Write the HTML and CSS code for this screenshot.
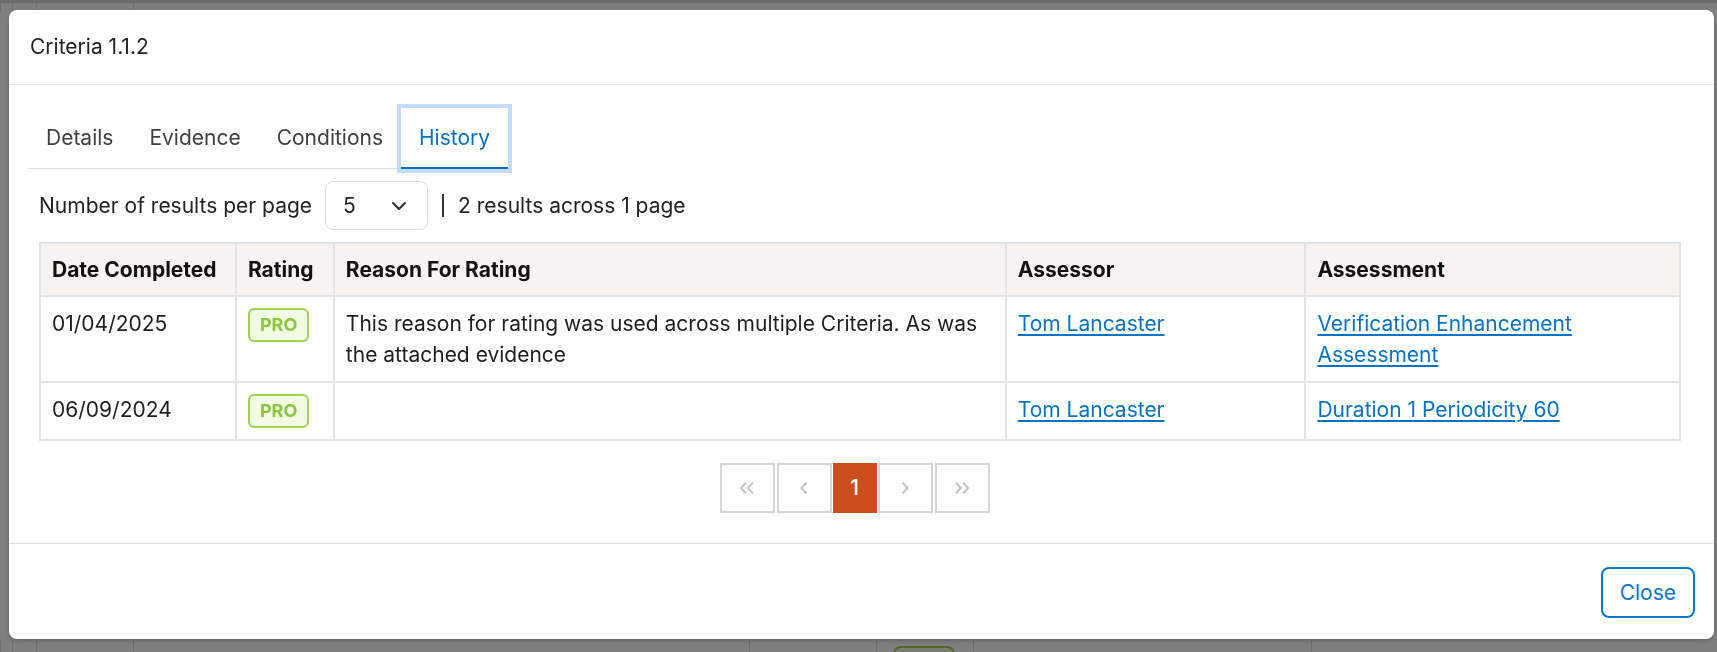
FILE: index.html
```html
<!DOCTYPE html>
<html lang="en">
<head>
    <meta charset="UTF-8">
    <meta name="viewport" content="width=device-width, initial-scale=1.0">
    <title>Criteria 1.1.2 - History</title>
    <link rel="stylesheet" href="styles.css">
</head>
<body>
    <div class="page">
        <div class="page-row page-row-top">
            <div class="pcell"></div>
            <div class="pcell"></div>
            <div class="pcell"></div>
            <div class="pcell"></div>
        </div>
        <div class="page-row page-row-bottom">
            <div class="pcell"></div>
            <div class="pcell"></div>
            <div class="pcell"></div>
            <div class="pcell"></div>
            <div class="pcell"></div>
            <div class="pcell"><span class="page-badge"></span></div>
            <div class="pcell"></div>
            <div class="pcell"></div>
        </div>
    </div>

    <div class="overlay">
        <div class="modal">
            <div class="modal-header">Criteria 1.1.2</div>

            <div class="modal-body">
                <div class="tabs">
                    <button class="tab">Details</button>
                    <button class="tab">Evidence</button>
                    <button class="tab">Conditions</button>
                    <button class="tab active">History</button>
                </div>

                <div class="results-bar">
                    <span>Number of results per page</span>
                    <div class="select">
                        <span>5</span>
                        <svg width="18" height="12" viewBox="0 0 18 12"><path d="M3 3 L9 9 L15 3" fill="none" stroke="#2b2b2b" stroke-width="2" stroke-linecap="round" stroke-linejoin="round"/></svg>
                    </div>
                    <span class="divider"></span>
                    <span>2 results across 1 page</span>
                </div>

                <table class="history">
                    <thead>
                        <tr>
                            <th class="col-date">Date Completed</th>
                            <th class="col-rating">Rating</th>
                            <th class="col-reason">Reason For Rating</th>
                            <th class="col-assessor">Assessor</th>
                            <th class="col-assessment">Assessment</th>
                        </tr>
                    </thead>
                    <tbody>
                        <tr>
                            <td>01/04/2025</td>
                            <td><span class="badge">PRO</span></td>
                            <td>This reason for rating was used across multiple Criteria. As was the attached evidence</td>
                            <td><a href="#">Tom Lancaster</a></td>
                            <td><a href="#">Verification Enhancement Assessment</a></td>
                        </tr>
                        <tr>
                            <td>06/09/2024</td>
                            <td><span class="badge">PRO</span></td>
                            <td></td>
                            <td><a href="#">Tom Lancaster</a></td>
                            <td><a href="#">Duration 1 Periodicity 60</a></td>
                        </tr>
                    </tbody>
                </table>

                <div class="pagination">
                    <button class="page-btn">
                        <svg width="18" height="14" viewBox="0 0 18 14"><path d="M8 1.5 L3 7 L8 12.5 M15 1.5 L10 7 L15 12.5" fill="none" stroke="#c2c2c2" stroke-width="2"/></svg>
                    </button>
                    <button class="page-btn">
                        <svg width="10" height="14" viewBox="0 0 10 14"><path d="M7.5 1.5 L2.5 7 L7.5 12.5" fill="none" stroke="#c2c2c2" stroke-width="2"/></svg>
                    </button>
                    <button class="page-btn current">1</button>
                    <button class="page-btn">
                        <svg width="10" height="14" viewBox="0 0 10 14"><path d="M2.5 1.5 L7.5 7 L2.5 12.5" fill="none" stroke="#c2c2c2" stroke-width="2"/></svg>
                    </button>
                    <button class="page-btn">
                        <svg width="18" height="14" viewBox="0 0 18 14"><path d="M3 1.5 L8 7 L3 12.5 M10 1.5 L15 7 L10 12.5" fill="none" stroke="#c2c2c2" stroke-width="2"/></svg>
                    </button>
                </div>
            </div>

            <div class="modal-footer">
                <button class="btn-close">Close</button>
            </div>
        </div>
    </div>
</body>
</html>
```

FILE: styles.css
```css
* {
    box-sizing: border-box;
    margin: 0;
    padding: 0;
}

body {
    font-family: 'Inter', 'Noto Sans', sans-serif;
    font-size: 21px;
    line-height: 30px;
    color: #1e1e1e;
    background: #ffffff;
    width: 1717px;
    height: 652px;
    overflow: hidden;
}

/* page behind the dialog */
.page {
    height: 652px;
    display: flex;
    flex-direction: column;
    justify-content: space-between;
    background: #ffffff;
}

.page-row {
    display: grid;
    height: 12px;
}

.page-row-top {
    grid-template-columns: 12px 24px 97px 1fr;
    border-top: 3px solid #d6d6d6;
}

.page-row-bottom {
    grid-template-columns: 12px 24px 97px 616px 127px 97px 338px 1fr;
}

.pcell {
    border-left: 1px solid #dcdfe3;
}

.page-badge {
    display: block;
    width: 62px;
    height: 20px;
    margin: 6px 0 0 16px;
    border: 2px solid #a3d153;
    border-radius: 8px;
    background: #f1fbe4;
}

/* dialog */
.overlay {
    position: fixed;
    inset: 0;
    background: rgba(0, 0, 0, 0.5);
}

.modal {
    margin: 10px 3px 0 9px;
    background: #ffffff;
    border-radius: 8px;
    box-shadow: 0 2px 4px rgba(0, 0, 0, 0.2);
}

.modal-header {
    padding: 22px 21px;
    border-bottom: 1px solid #dee2e6;
    color: #222222;
}

.modal-body {
    padding: 23px 20px 30px 19px;
}

.tabs {
    display: inline-flex;
    border-bottom: 1px solid #dee2e6;
}

.tab {
    font: inherit;
    background: none;
    border: none;
    padding: 15px 18px 15px;
    color: #404040;
    cursor: pointer;
}

.tab.active {
    color: #0b6fbf;
    border-bottom: 2px solid #0b6fbf;
    margin-bottom: -1px;
    padding-bottom: 14px;
    box-shadow: 0 0 0 4px #c4dcfb;
}

.results-bar {
    display: flex;
    align-items: center;
    gap: 13px;
    margin-top: 12px;
    padding-left: 11px;
    color: #222222;
}

.select {
    width: 103px;
    height: 49px;
    display: flex;
    align-items: center;
    justify-content: space-between;
    padding: 0 19px 0 17px;
    border: 1.5px solid #d9dde2;
    border-radius: 8px;
}

.divider {
    width: 2px;
    height: 23px;
    background: #333333;
    margin: 0 1px;
}

.history {
    width: 1642px;
    margin: 12px 0 0 11px;
    border-collapse: collapse;
    border: 2px solid #e1e4e8;
    line-height: 31px;
}

.history th,
.history td {
    border: 2px solid #e1e4e8;
    padding: 11px 11px;
    text-align: left;
    vertical-align: top;
}

.history th {
    padding: 10px 11px;
    background: #f8f3f1;
    font-weight: 700;
    color: #111111;
}

.col-date { width: 196px; }
.col-rating { width: 98px; }
.col-reason { width: 673px; }
.col-assessor { width: 300px; }
.col-assessment { width: 375px; }

.history a {
    color: #0a72c4;
    text-decoration: underline;
    text-decoration-thickness: 1.5px;
    text-underline-offset: 3px;
}

.badge {
    display: inline-block;
    vertical-align: top;
    height: 34px;
    padding: 0 10px;
    border: 2px solid #a3d153;
    border-radius: 6px;
    background: #f1fbe4;
    color: #8cc63f;
    font-size: 18px;
    font-weight: 700;
    line-height: 30px;
}

.pagination {
    display: flex;
    justify-content: center;
    gap: 2px;
    margin-top: 22px;
    padding-right: 13px;
}

.page-btn {
    width: 55px;
    height: 50px;
    display: flex;
    align-items: center;
    justify-content: center;
    background: #ffffff;
    border: 2px solid #d6d6d6;
    font: inherit;
    cursor: pointer;
}

.page-btn.current {
    width: 44px;
    margin: 0 -1px;
    background: #cc4e1c;
    border-color: #cc4e1c;
    color: #ffffff;
    font-weight: 500;
}

.modal-footer {
    display: flex;
    justify-content: flex-end;
    padding: 23px 19px 21px 22px;
    border-top: 1px solid #dee2e6;
}

.btn-close {
    height: 51px;
    padding: 0 17px;
    font: inherit;
    color: #0b74c6;
    background: #ffffff;
    border: 2px solid #0b78c8;
    border-radius: 8px;
    cursor: pointer;
}
```
